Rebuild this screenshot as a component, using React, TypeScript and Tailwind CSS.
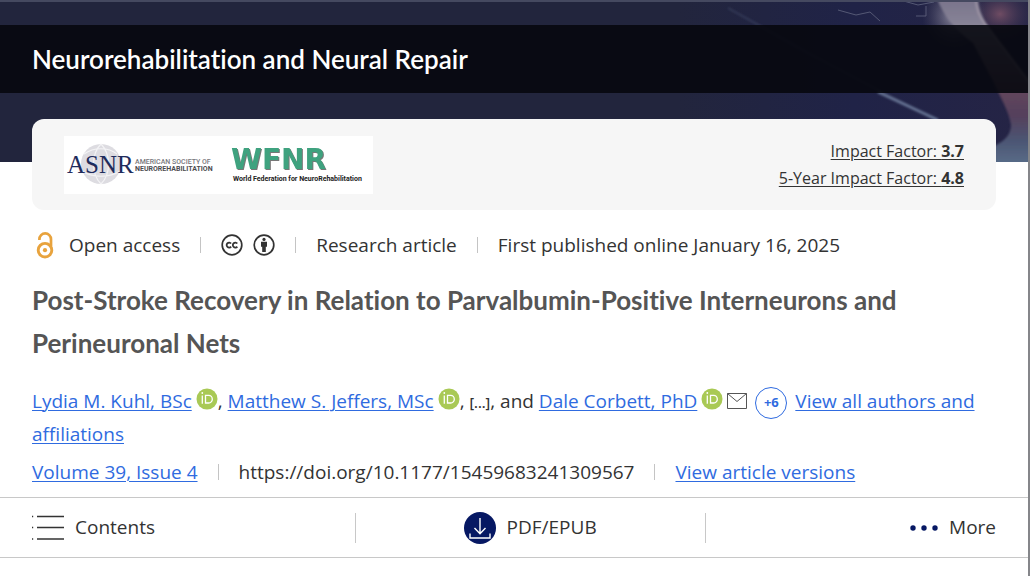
import type { ReactNode } from "react";

const linkClass = "text-[#2f6be0] underline decoration-1 underline-offset-2";
const headingFont = "font-['Lato',sans-serif] [font-variant-ligatures:none]";

const Divider = () => <span className="w-px h-4 bg-[#c4c4c4]" />;

const OrcidIcon = () => (
  <svg viewBox="0 0 22 22" className="w-[22px] h-[22px]" aria-hidden="true">
    <circle cx="11" cy="11" r="10.5" fill="#a9c955" />
    <g stroke="#fff" strokeWidth="1.3" fill="none">
      <path d="M6.3 7.4v8.3M9.5 7.4h3.2a3.6 3.8 0 0 1 0 7.6H9.5z" />
    </g>
    <circle cx="6.3" cy="5" r="0.9" fill="#fff" />
  </svg>
);

const OpenAccessIcon = () => (
  <svg viewBox="0 0 18 27" className="w-[18px] h-[27px]" fill="none" stroke="#e8a33d">
    <circle cx="9" cy="18.2" r="6.8" strokeWidth="2.9" />
    <path d="M3.4 8V7.2a5.7 5.7 0 0 1 11.6 0V14" strokeWidth="2.7" />
    <circle cx="9" cy="18.2" r="2.1" fill="#e8a33d" stroke="none" />
  </svg>
);

const CcIcon = () => (
  <svg viewBox="0 0 22 22" className="w-[22px] h-[22px]" fill="none" stroke="#333">
    <circle cx="11" cy="11" r="9.8" strokeWidth="1.7" />
    <path d="M10.1 9.5a2.5 2.5 0 1 0 0 3.1M16.3 9.5a2.5 2.5 0 1 0 0 3.1" strokeWidth="1.8" />
  </svg>
);

const ByIcon = () => (
  <svg viewBox="0 0 22 22" className="w-[22px] h-[22px]">
    <circle cx="11" cy="11" r="9.8" fill="none" stroke="#333" strokeWidth="1.7" />
    <circle cx="11" cy="5.4" r="1.6" fill="#333" />
    <path d="M8 7.8h6v5h-1.2v5.2H9.2v-5.2H8z" fill="#333" />
  </svg>
);

const MailIcon = () => (
  <svg viewBox="0 0 20 16" className="w-5 h-4" fill="none" stroke="#555" strokeWidth="1">
    <path d="M.5.5h19v15H.5zM.5.5l9.5 8 9.5-8" />
  </svg>
);

const ListIcon = () => (
  <svg viewBox="0 0 32 26" className="w-8 h-[26px]" stroke="#333" strokeWidth="1.5">
    <path d="M5 1.5h27M5 12.5h27M5 24h27M0 1.5h1.2M0 12.5h1.2M0 24h1.2" />
  </svg>
);

const DownloadIcon = () => (
  <svg viewBox="0 0 32 32" className="w-8 h-8" fill="none" stroke="#fff" strokeWidth="1.4">
    <circle cx="16" cy="16" r="16" fill="#061863" stroke="none" />
    <path d="M16 6v15.5M10.5 16l5.5 5.7 5.5-5.7M6 21.5V26h20v-4.5" />
  </svg>
);

const DotsIcon = () => (
  <svg viewBox="0 0 28 6" className="w-7 h-[6px]" fill="#061863">
    <circle cx="3" cy="3" r="2.7" />
    <circle cx="14" cy="3" r="2.7" />
    <circle cx="25" cy="3" r="2.7" />
  </svg>
);

const SocietyLogos = () => (
  <svg viewBox="0 0 309 58" className="w-[309px] h-[58px] bg-white" role="img" aria-label="ASNR and WFNR">
    <circle cx="37" cy="28" r="20" fill="#dddce1" />
    <g fill="none" stroke="#f3f3f5" strokeWidth="1.2">
      <path d="M20 18c10-7 24-7 33 0M18 35c10 7 28 7 38 0M37 8c-10 10-10 30 0 40M37 8c10 10 10 30 0 40" />
    </g>
    <text x="3" y="37" fontFamily="Liberation Serif, serif" fontSize="25" fill="#1f2c5c">ASNR</text>
    <g fontFamily="Roboto, sans-serif" fontSize="7">
      <text x="71" y="28" fontWeight="500" fill="#77777c">AMERICAN SOCIETY OF</text>
      <text x="71" y="35" fontWeight="700" fill="#4c4c50">NEUROREHABILITATION</text>
      <text x="169" y="45" fontWeight="700" fill="#222">World Federation for NeuroRehabilitation</text>
    </g>
    <text
      x="167" y="33" fill="#3fa27f" fontFamily="DejaVu Sans, sans-serif" fontSize="28" fontWeight="700"
      className="[filter:drop-shadow(1px_1px_0_#777)]"
    >
      WFNR
    </text>
  </svg>
);

// Neuron artwork anchored to the right side of the banner
const BannerArt = () => (
  <svg viewBox="0 0 350 162" className="absolute right-0 top-0 w-[350px] h-[162px]" aria-hidden="true">
    <defs>
      <linearGradient id="night" x1="0" x2="1">
        <stop offset="0" stopColor="#22253d" />
        <stop offset="0.5" stopColor="#202347" />
        <stop offset="1" stopColor="#252445" />
      </linearGradient>
      <radialGradient id="glow">
        <stop offset="0" stopColor="#a8a5b5" stopOpacity="0.8" />
        <stop offset="1" stopColor="#5c5870" stopOpacity="0" />
      </radialGradient>
      <radialGradient id="ember">
        <stop offset="0" stopColor="#6f4c63" />
        <stop offset="1" stopColor="#33304f" stopOpacity="0" />
      </radialGradient>
      <linearGradient id="branch" x1="0" y1="0" x2="0" y2="1">
        <stop offset="0" stopColor="#77728a" />
        <stop offset="0.2" stopColor="#8b8799" />
        <stop offset="0.55" stopColor="#62465c" />
        <stop offset="0.7" stopColor="#54405c" />
        <stop offset="0.85" stopColor="#4c5674" />
        <stop offset="1" stopColor="#5b6f8b" />
      </linearGradient>
      <filter id="soft"><feGaussianBlur stdDeviation="1.2" /></filter>
    </defs>
    <rect width="350" height="162" fill="url(#night)" />
    <ellipse cx="322" cy="14" rx="36" ry="30" fill="url(#ember)" />
    <ellipse cx="276" cy="16" rx="32" ry="34" fill="url(#glow)" />
    <g filter="url(#soft)">
      <path d="M258-4h42c0 12 4 20 8 27l46 62v82h-40v-20c9-4 19-10 19-22-2-14-10-26-18-44l-20-38C280 32 266 18 258-4z" fill="url(#branch)" />
      <path d="M298-2c0 10 4 20 10 27l44 58" stroke="#a79dab" strokeWidth="2" fill="none" opacity="0.7" />
      <path d="M50 8l82 46 68 36 62 32" stroke="#515a78" strokeWidth="2" fill="none" opacity="0.4" />
      <path d="M200 92l60 28" stroke="#7484a4" strokeWidth="3" fill="none" opacity="0.8" />
    </g>
    <path d="M160 10l18 5 14-3 10 9M222 0l18 5 16-3M248 6v10h-10" stroke="#626680" strokeWidth="0.8" fill="none" />
  </svg>
);

const ToolButton = ({ icon, label }: { icon: ReactNode; label: string }) => (
  <button className="flex items-center gap-[11px] text-[19px]">
    {icon}
    {label}
  </button>
);

const Author = ({ name }: { name: string }) => (
  <>
    <a href="#" className={linkClass}>{name}</a>
    <span className="inline-block align-middle pb-2 pl-1 leading-none"><OrcidIcon /></span>
  </>
);

export default function App() {
  return (
    <div className="flex min-h-screen bg-white text-[#333] font-['Open_Sans','Noto_Sans',sans-serif]">
      <div className="flex-1 min-w-0">
        {/* Journal banner */}
        <header className="relative bg-[#22253d] h-[162px]">
          <BannerArt />
          <div className="relative h-[25px] border-t-2 border-[#454960]" />
          <div className="relative bg-[#07080e]/90 h-[68px] px-8 flex items-center">
            <h2 className={`text-white text-[26px] font-semibold ${headingFont}`}>Neurorehabilitation and Neural Repair</h2>
          </div>
        </header>

        <main>
          <div className="px-8">
            <section className="relative -mt-[43px] bg-[#f6f6f6] rounded-xl h-[91px] px-8 flex items-center justify-between">
              <SocietyLogos />
              <div className="flex flex-col items-end text-base leading-[27px]">
                <a href="#" className="underline underline-offset-2">Impact Factor: <b>3.7</b></a>
                <a href="#" className="underline underline-offset-2">5-Year Impact Factor: <b>4.8</b></a>
              </div>
            </section>

            <div className="flex items-center gap-5 mt-[19px] h-8 text-[19px]">
              <span className="flex items-center gap-[15px] pl-1"><OpenAccessIcon />Open access</span>
              <Divider />
              <span className="flex gap-[10px]"><CcIcon /><ByIcon /></span>
              <Divider />
              <span>Research article</span>
              <Divider />
              <span>First published online January 16, 2025</span>
            </div>

            <h1 className={`mt-[18px] text-[#555] text-[26px] leading-[43px] font-bold ${headingFont}`}>
              Post-Stroke Recovery in Relation to Parvalbumin-Positive Interneurons and Perineuronal Nets
            </h1>

            <div className="mt-5 text-[19px] leading-[33px]">
              <Author name="Lydia M. Kuhl, BSc" />, <Author name="Matthew S. Jeffers, MSc" />,{" "}
              <button className="text-sm font-semibold">[...]</button>, and <Author name="Dale Corbett, PhD" />
              <a href="#" aria-label="Email Dale Corbett" className="inline-block align-middle pb-1 pl-1"><MailIcon /></a>
              <button className="inline-flex items-center justify-center align-middle size-8 -my-2 mx-2 rounded-full border border-[#2f6be0] text-[#2f6be0] text-[13px] font-bold">+6</button>
              <a href="#" className={linkClass}>View all authors and affiliations</a>
            </div>

            <div className="flex items-center gap-5 mt-1 h-[34px] text-[19px]">
              <a href="#" className={linkClass}>Volume 39, Issue 4</a>
              <Divider />
              <span>https://doi.org/10.1177/15459683241309567</span>
              <Divider />
              <a href="#" className={linkClass}>View article versions</a>
            </div>
          </div>

          <nav className="flex items-center mt-2 h-[61px] px-8 border-y border-[#c8c8c8]">
            <div className="flex-10"><ToolButton icon={<ListIcon />} label="Contents" /></div>
            <div className="w-[351px] h-[30px] flex items-center justify-center border-x border-[#c8c8c8]">
              <ToolButton icon={<DownloadIcon />} label="PDF/EPUB" />
            </div>
            <div className="flex-9 flex justify-end"><ToolButton icon={<DotsIcon />} label="More" /></div>
          </nav>
        </main>
      </div>
      <div className="w-[2px] bg-[#85868a]" />
    </div>
  );
}
